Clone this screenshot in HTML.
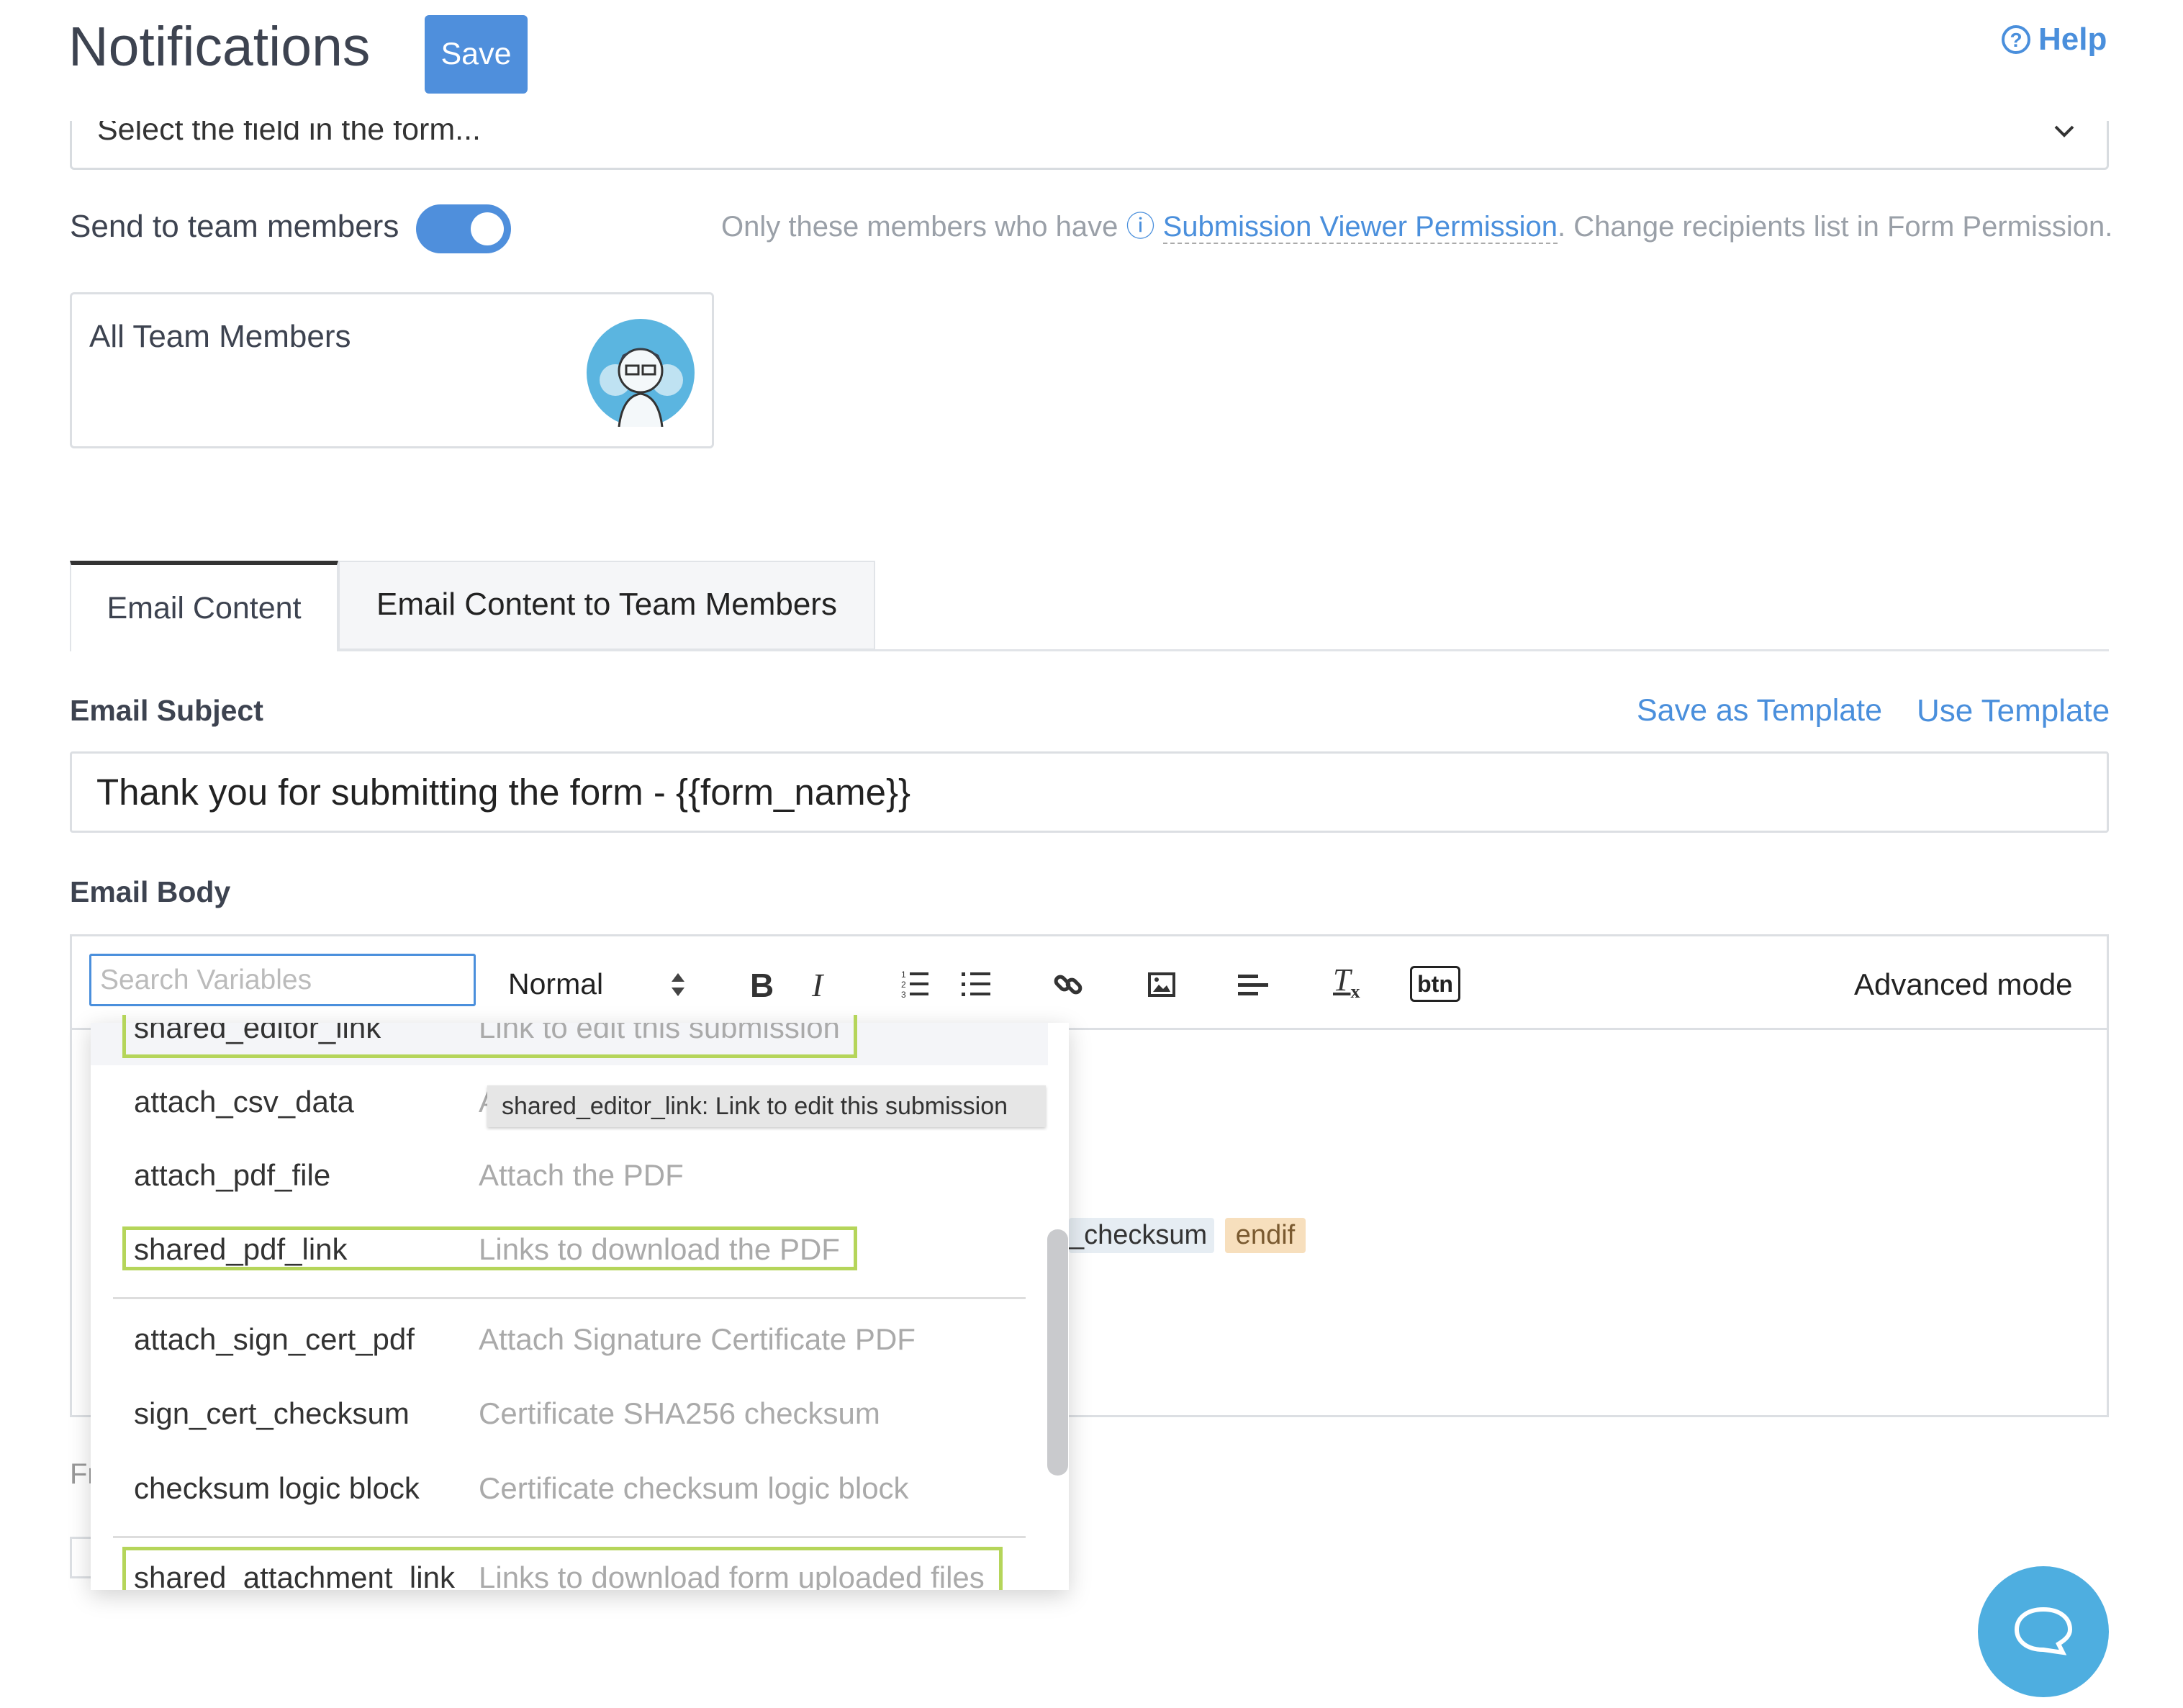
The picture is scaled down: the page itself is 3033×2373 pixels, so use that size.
<!DOCTYPE html>
<html><head><meta charset="utf-8"><style>
*{box-sizing:border-box;margin:0;padding:0}
body{width:3033px;height:2373px;background:#fff;position:relative;overflow:hidden;font-family:"Liberation Sans",sans-serif;color:#3d4350}
.a{position:absolute;white-space:nowrap}
.row{position:absolute;left:126px;width:1330px;height:103px;font-size:42px;line-height:103px}
.row .n{position:absolute;left:60px;color:#333}
.row .d{position:absolute;left:539px;color:#aaa}
.g{position:absolute;border:5px solid #b5d55a}
</style></head><body>
<div class="a" style="left:97px;top:130px;width:2833px;height:106px;border:3px solid #d8dce0;border-radius:6px"></div>
<div class="a" style="left:135px;top:156px;font-size:43px;color:#333">Select the field in the form...</div>
<svg class="a" style="left:2852px;top:172px" width="32" height="22"><path d="M4 4 L16 16 L28 4" stroke="#333" stroke-width="4" fill="none"/></svg>
<div class="a" style="left:0;top:0;width:3033px;height:168px;background:#fff"></div>
<div class="a" style="left:95px;top:20px;font-size:77px;color:#3d4350;line-height:90px">Notifications</div>
<div class="a" style="left:590px;top:21px;width:143px;height:109px;background:#4f8fdc;border-radius:6px;color:#fff;font-size:43px;line-height:109px;text-align:center">Save</div>
<svg class="a" style="left:2780px;top:34px" width="42" height="42"><circle cx="21" cy="21" r="18" stroke="#4a8fdc" stroke-width="4" fill="none"/><text x="21" y="31" font-size="28" text-anchor="middle" fill="#4a8fdc" font-family="Liberation Sans" font-weight="bold">?</text></svg>
<div class="a" style="left:2832px;top:30px;font-size:44px;font-weight:bold;color:#4a8fdc">Help</div>
<div class="a" style="left:97px;top:290px;font-size:44px;color:#3d4350">Send to team members</div>
<div class="a" style="left:578px;top:284px;width:132px;height:68px;background:#4f8fdc;border-radius:34px"></div>
<div class="a" style="left:654px;top:295px;width:46px;height:46px;background:#fff;border-radius:50%"></div>
<div class="a" style="left:1002px;top:282px;font-size:40px;color:#9aa0a8">Only these members who have <span style="color:#4a8fdc">ⓘ <span style="border-bottom:2px dashed #aaa">Submission Viewer Permission</span></span>. Change recipients list in Form Permission.</div>
<div class="a" style="left:97px;top:406px;width:895px;height:217px;border:3px solid #dcdfe3;border-radius:6px"></div>
<div class="a" style="left:124px;top:443px;font-size:44px;color:#3d4350">All Team Members</div>
<svg class="a" style="left:815px;top:443px" width="150" height="150"><circle cx="75" cy="75" r="75" fill="#5bb5e0"/><circle cx="40" cy="85" r="22" fill="#bfe2f2"/><circle cx="112" cy="85" r="22" fill="#bfe2f2"/><circle cx="75" cy="72" r="30" fill="#f4f8fa" stroke="#333" stroke-width="3"/><path d="M45 62 Q75 20 105 62 L100 50 Q75 35 50 50Z" fill="#3b4250"/><rect x="55" y="65" width="17" height="12" fill="none" stroke="#333" stroke-width="3"/><rect x="78" y="65" width="17" height="12" fill="none" stroke="#333" stroke-width="3"/><path d="M45 150 Q50 108 75 104 Q100 108 105 150" fill="#f4f8fa" stroke="#333" stroke-width="3"/></svg>
<div class="a" style="left:97px;top:902px;width:2833px;height:3px;background:#e1e4e8"></div>
<div class="a" style="left:97px;top:779px;width:373px;height:126px;border:2px solid #e1e4e8;border-top:6px solid #333;border-bottom:none;background:#fff;font-size:43px;text-align:center;line-height:120px;color:#3d4350">Email Content</div>
<div class="a" style="left:470px;top:779px;width:746px;height:124px;border:2px solid #e1e4e8;background:#f5f6f8;font-size:44px;text-align:center;line-height:118px;color:#222">Email Content to Team Members</div>
<div class="a" style="left:97px;top:964px;font-size:41px;font-weight:bold;color:#3d4350">Email Subject</div>
<div class="a" style="left:2274px;top:963px;font-size:43px;color:#4a8fdc">Save as Template</div>
<div class="a" style="left:2663px;top:963px;font-size:44px;color:#4a8fdc">Use Template</div>
<div class="a" style="left:97px;top:1044px;width:2833px;height:113px;border:3px solid #dcdfe3;border-radius:4px"></div>
<div class="a" style="left:134px;top:1071px;font-size:51px;color:#222">Thank you for submitting the form - {{form_name}}</div>
<div class="a" style="left:97px;top:1216px;font-size:41px;font-weight:bold;color:#3d4350">Email Body</div>
<div class="a" style="left:97px;top:1298px;width:2833px;height:671px;border:3px solid #dcdfe3"></div>
<div class="a" style="left:97px;top:1428px;width:2833px;height:3px;background:#dcdfe3"></div>
<div class="a" style="left:124px;top:1325px;width:537px;height:73px;border:3px solid #4a8fdc;border-radius:3px;font-size:39px;color:#bbb;line-height:67px;padding-left:12px">Search Variables</div>
<div class="a" style="left:706px;top:1344px;font-size:41px;color:#222">Normal</div>
<svg class="a" style="left:930px;top:1350px" width="24" height="36"><path d="M12 2 L21 14 H3Z M12 34 L21 22 H3Z" fill="#444"/></svg>
<div class="a" style="left:1042px;top:1342px;font-size:46px;font-weight:bold;color:#333">B</div>
<div class="a" style="left:1128px;top:1342px;font-size:46px;font-style:italic;font-family:'Liberation Serif',serif;color:#333">I</div>
<svg class="a" style="left:1252px;top:1346px" width="40" height="42" fill="#333"><text x="0" y="12" font-size="12" font-family="Liberation Sans">1</text><text x="0" y="26" font-size="12" font-family="Liberation Sans">2</text><text x="0" y="40" font-size="12" font-family="Liberation Sans">3</text><rect x="12" y="5" width="26" height="4"/><rect x="12" y="19" width="26" height="4"/><rect x="12" y="33" width="26" height="4"/></svg>
<svg class="a" style="left:1336px;top:1348px" width="42" height="40" fill="#333"><rect x="0" y="3" width="5" height="5"/><rect x="0" y="17" width="5" height="5"/><rect x="0" y="31" width="5" height="5"/><rect x="12" y="3" width="28" height="4"/><rect x="12" y="17" width="28" height="4"/><rect x="12" y="31" width="28" height="4"/></svg>
<svg class="a" style="left:1462px;top:1346px" width="44" height="44" fill="none" stroke="#333" stroke-width="5"><rect x="4" y="14" width="20" height="12" rx="6" transform="rotate(45 14 20)"/><rect x="20" y="18" width="20" height="12" rx="6" transform="rotate(45 30 24)"/></svg>
<svg class="a" style="left:1594px;top:1350px" width="40" height="36"><rect x="3" y="3" width="34" height="30" fill="none" stroke="#333" stroke-width="4"/><path d="M8 28 L16 18 L22 24 L27 19 L32 28Z" fill="#333"/><circle cx="13" cy="11" r="3" fill="#333"/></svg>
<svg class="a" style="left:1720px;top:1352px" width="44" height="34" fill="#333"><rect x="0" y="2" width="28" height="5"/><rect x="0" y="14" width="42" height="5"/><rect x="0" y="26" width="28" height="5"/></svg>
<div class="a" style="left:1852px;top:1336px;font-size:44px;font-style:italic;font-family:'Liberation Serif',serif;color:#333;text-decoration:underline">T<sub style="font-size:26px;font-style:normal;font-weight:bold">x</sub></div>
<div class="a" style="left:1959px;top:1342px;width:70px;height:50px;border:3px solid #222;border-radius:6px;font-size:32px;font-weight:bold;text-align:center;line-height:44px;color:#222">btn</div>
<div class="a" style="left:2576px;top:1344px;font-size:42px;color:#222">Advanced mode</div>
<div class="a" style="left:1485px;top:1692px;width:202px;height:49px;background:#e6edf3;border-radius:4px;font-size:38px;line-height:49px;color:#333">_checksum</div>
<div class="a" style="left:1702px;top:1692px;width:112px;height:49px;background:#f7dfbd;border-radius:4px;font-size:38px;line-height:49px;color:#7a5a30;text-align:center">endif</div>
<div class="a" style="left:97px;top:2026px;font-size:40px;color:#999">Fr</div>
<div class="a" style="left:97px;top:2135px;width:60px;height:58px;border:3px solid #dcdfe3"></div>
<div class="a" style="left:126px;top:1421px;width:1359px;height:788px;background:#fff;box-shadow:0 8px 30px rgba(0,0,0,.18);overflow:hidden">
<div style="position:absolute;left:0;top:0;width:1330px;height:59px;background:#f4f5f8"></div>
</div>
<div class="row" style="top:1376px;clip-path:inset(45px 0 0 0)"><span class="n">shared_editor_link</span><span class="d">Link to edit this submission</span></div>
<div class="row" style="top:1479px"><span class="n">attach_csv_data</span><span class="d">Attach CSV data</span></div>
<div class="row" style="top:1581px"><span class="n">attach_pdf_file</span><span class="d">Attach the PDF</span></div>
<div class="row" style="top:1684px"><span class="n">shared_pdf_link</span><span class="d">Links to download the PDF</span></div>
<div class="a" style="left:157px;top:1802px;width:1268px;height:3px;background:#ddd"></div>
<div class="row" style="top:1809px"><span class="n">attach_sign_cert_pdf</span><span class="d">Attach Signature Certificate PDF</span></div>
<div class="row" style="top:1912px"><span class="n">sign_cert_checksum</span><span class="d">Certificate SHA256 checksum</span></div>
<div class="row" style="top:2016px"><span class="n">checksum logic block</span><span class="d">Certificate checksum logic block</span></div>
<div class="a" style="left:157px;top:2134px;width:1268px;height:3px;background:#ddd"></div>
<div class="row" style="top:2140px;height:69px;overflow:hidden"><span class="n" style="top:0">shared_attachment_link</span><span class="d">Links to download form uploaded files</span></div>
<div class="g" style="left:170px;top:1410px;width:1021px;height:60px;border-top:none"></div>
<div class="g" style="left:170px;top:1704px;width:1021px;height:61px"></div>
<div class="g" style="left:170px;top:2149px;width:1223px;height:60px;border-bottom:none"></div>
<div class="a" style="left:677px;top:1508px;width:776px;height:58px;background:#e6e6e6;box-shadow:0 2px 4px rgba(0,0,0,.2);font-size:34px;line-height:58px;padding-left:20px;color:#333">shared_editor_link: Link to edit this submission</div>
<div class="a" style="left:1455px;top:1708px;width:29px;height:342px;background:#c9cacd;border-radius:14px"></div>
<div class="a" style="left:2748px;top:2176px;width:182px;height:182px;background:#4eaee0;border-radius:50%"></div>
<svg class="a" style="left:2796px;top:2230px" width="86" height="74"><path d="M43 6 C20 6 6 18 6 34 C6 50 20 62 43 62 L70 66 L64 54 C74 48 80 42 80 34 C80 18 66 6 43 6Z" fill="none" stroke="#fff" stroke-width="6"/></svg>
</body></html>
